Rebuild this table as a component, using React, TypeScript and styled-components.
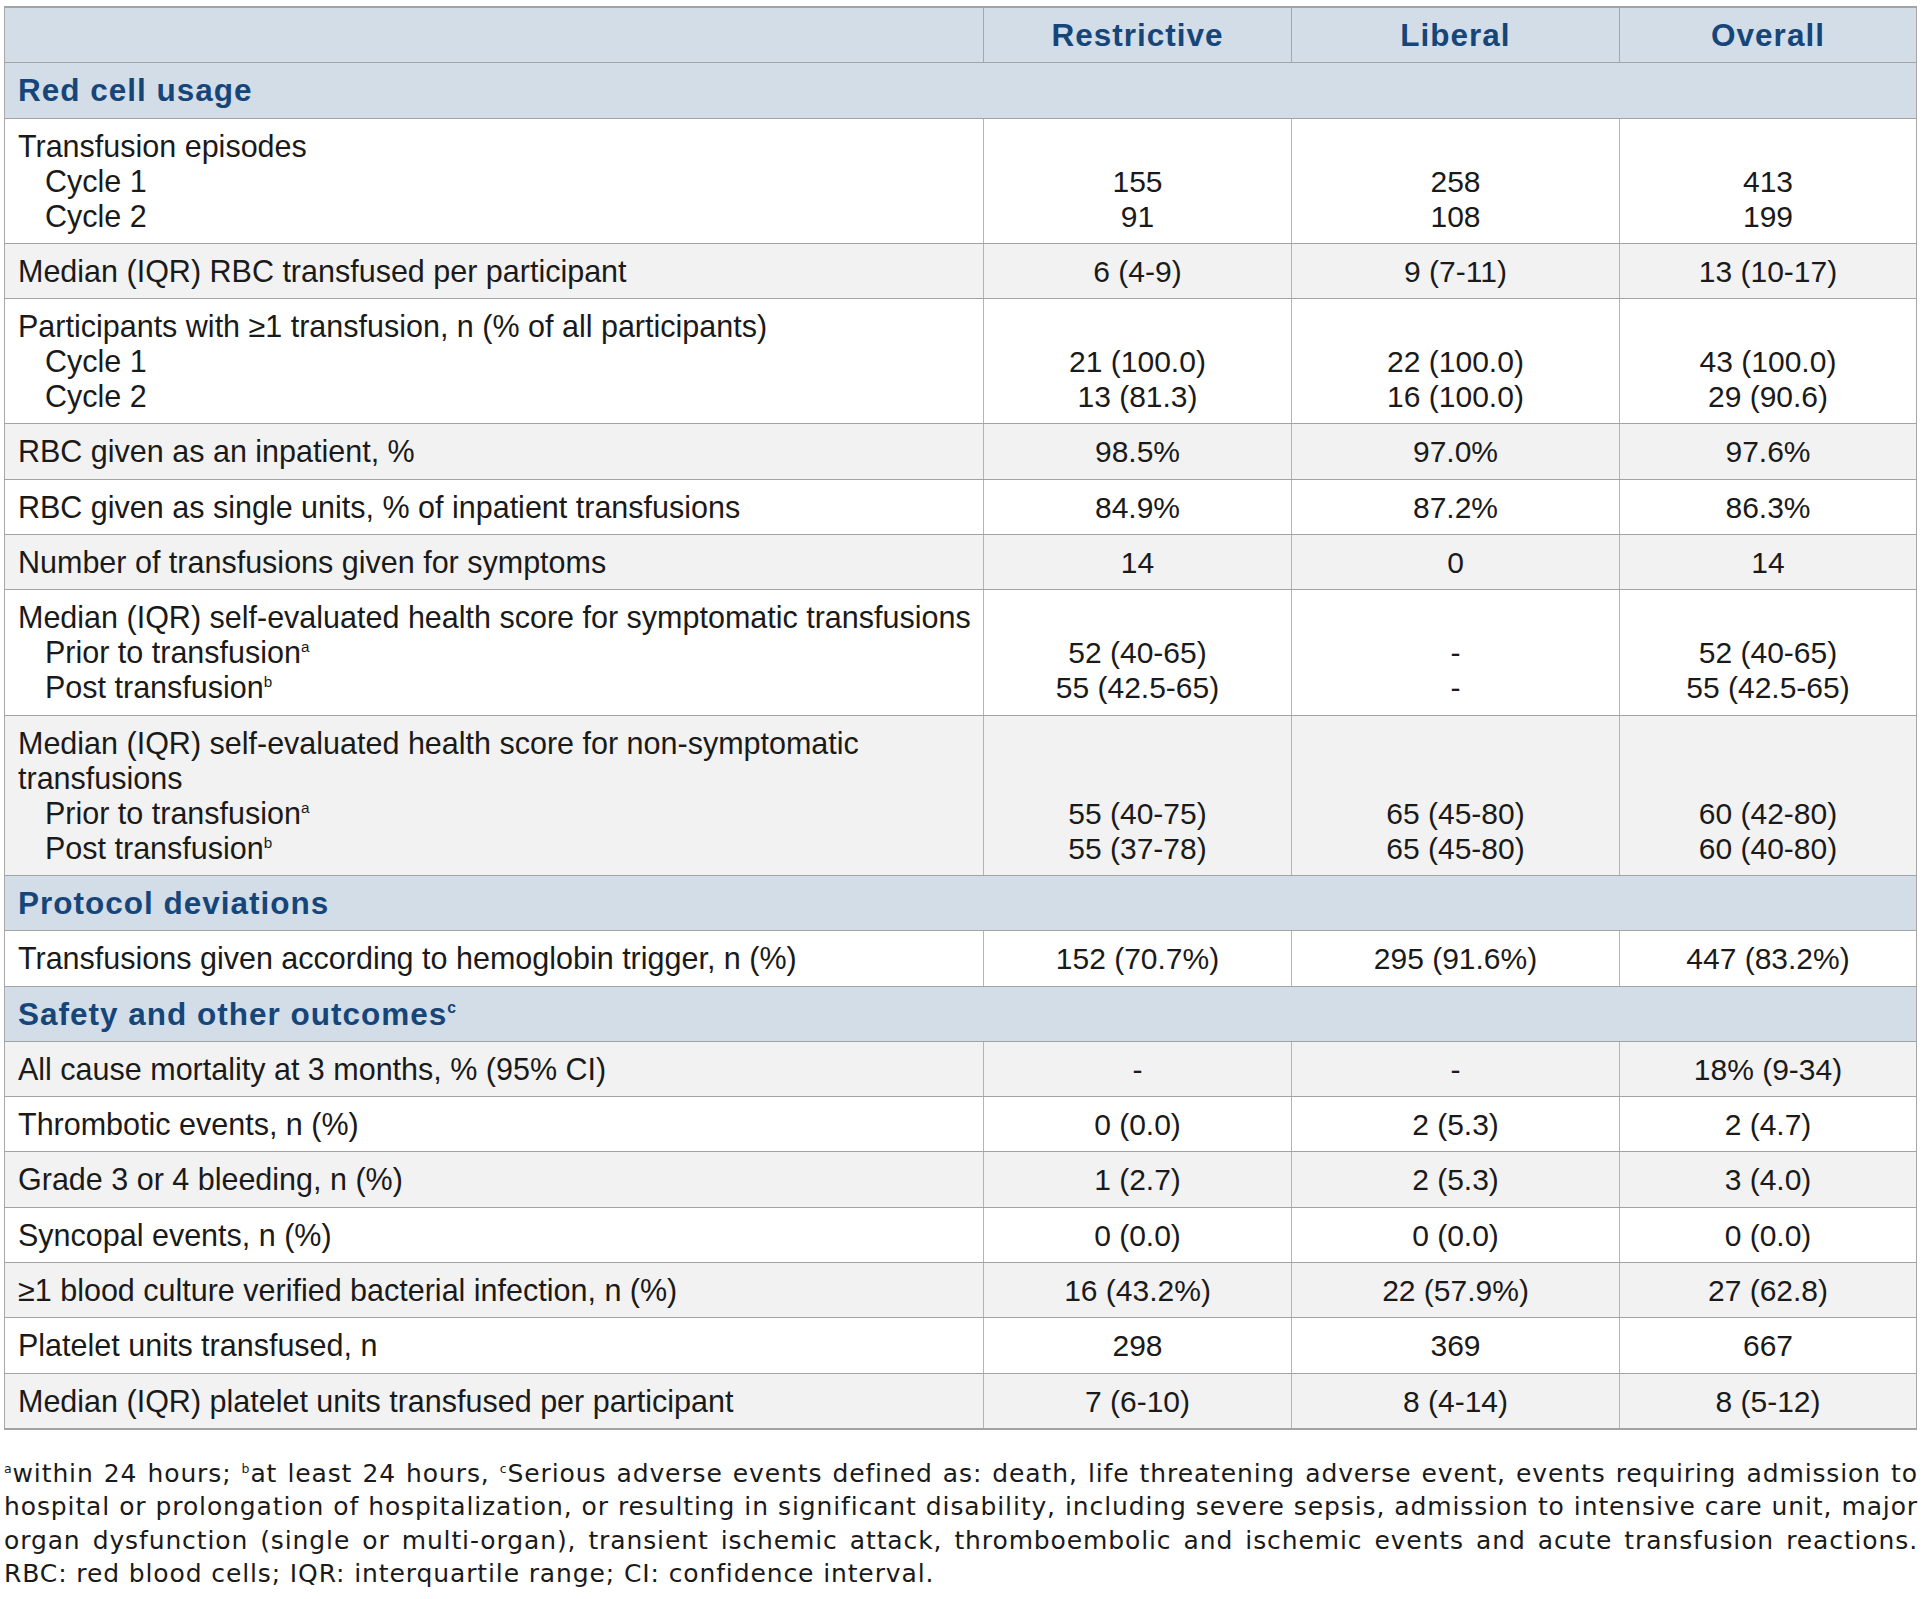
import React from "react";
import styled, { createGlobalStyle } from "styled-components";

const GlobalStyle = createGlobalStyle`
  html, body {
    margin: 0;
    padding: 0;
    background: #ffffff;
  }
  body {
    font-family: "Liberation Sans", Arial, sans-serif;
    color: #1a1a1a;
  }
`;

const Page = styled.div`
  width: 1925px;
  padding: 6px 9px 0 4px;
  box-sizing: border-box;
`;

const Table = styled.table`
  width: 1912px;
  table-layout: fixed;
  border-collapse: collapse;
  border-top: 2px solid #a3a3a3;
  border-bottom: 2px solid #a3a3a3;
  border-left: 1px solid #a8a8a8;
  border-right: 1px solid #a8a8a8;
  font-size: 30px;
`;

const Row = styled.tr<{ $tone: "head" | "white" | "grey" }>`
  background: ${({ $tone }) =>
    $tone === "head" ? "#d3dde7" : $tone === "grey" ? "#f2f2f2" : "#ffffff"};
`;

const HeadCell = styled.th`
  padding: 10px 12px 9.3px;
  line-height: 35px;
  font-size: 31.5px;
  font-weight: 700;
  letter-spacing: 1px;
  color: #164679;
  text-align: center;
  border-bottom: 1px solid #a3a3a3;
  border-left: 1px solid #a8a8a8;
  &:first-child {
    border-left: none;
  }
`;

const SectionCell = styled.td`
  padding: 10px 12px 9.3px 13px;
  line-height: 35px;
  font-size: 31.5px;
  font-weight: 700;
  letter-spacing: 1px;
  color: #164679;
  border-bottom: 1px solid #a3a3a3;
`;

const LabelCell = styled.td`
  padding: 10px 8px 9.3px 13px;
  line-height: 35px;
  font-size: 30.5px;
  vertical-align: top;
  border-bottom: 1px solid #a3a3a3;
  white-space: nowrap;
`;

const ValueCell = styled.td`
  padding: 10px 8px 9.3px;
  line-height: 35px;
  vertical-align: top;
  text-align: center;
  border-bottom: 1px solid #a3a3a3;
  border-left: 1px solid #b4b4b4;
  white-space: nowrap;
`;

const Line = styled.div<{ $indent?: boolean }>`
  height: 35px;
  padding-left: ${({ $indent }) => ($indent ? "27px" : "0")};
`;

const Sup = styled.sup`
  font-size: 0.5em;
  line-height: 0;
  vertical-align: 0.75em;
`;

const Notes = styled.div`
  margin-top: 27px;
  width: 1914px;
  font-family: "DejaVu Sans", Verdana, sans-serif;
  font-size: 25px;
  letter-spacing: 0.88px;
  line-height: 33.3px;
  color: #1a1a1a;
`;

const NoteLine = styled.div<{ $last?: boolean }>`
  white-space: nowrap;
  text-align: ${({ $last }) => ($last ? "left" : "justify")};
  text-align-last: ${({ $last }) => ($last ? "left" : "justify")};
`;

type LabelLine = { text: string; indent?: boolean; sup?: string };
type DataRow = { kind: "data"; label: LabelLine[]; values: string[][] };
type SectionRow = { kind: "section"; label: string; sup?: string };

const rows: (DataRow | SectionRow)[] = [
  { kind: "section", label: "Red cell usage" },
  {
    kind: "data",
    label: [
      { text: "Transfusion episodes" },
      { text: "Cycle 1", indent: true },
      { text: "Cycle 2", indent: true },
    ],
    values: [
      ["", "155", "91"],
      ["", "258", "108"],
      ["", "413", "199"],
    ],
  },
  {
    kind: "data",
    label: [{ text: "Median (IQR) RBC transfused per participant" }],
    values: [["6 (4-9)"], ["9 (7-11)"], ["13 (10-17)"]],
  },
  {
    kind: "data",
    label: [
      { text: "Participants with ≥1 transfusion, n (% of all participants)" },
      { text: "Cycle 1", indent: true },
      { text: "Cycle 2", indent: true },
    ],
    values: [
      ["", "21 (100.0)", "13 (81.3)"],
      ["", "22 (100.0)", "16 (100.0)"],
      ["", "43 (100.0)", "29 (90.6)"],
    ],
  },
  {
    kind: "data",
    label: [{ text: "RBC given as an inpatient, %" }],
    values: [["98.5%"], ["97.0%"], ["97.6%"]],
  },
  {
    kind: "data",
    label: [{ text: "RBC given as single units, % of inpatient transfusions" }],
    values: [["84.9%"], ["87.2%"], ["86.3%"]],
  },
  {
    kind: "data",
    label: [{ text: "Number of transfusions given for symptoms" }],
    values: [["14"], ["0"], ["14"]],
  },
  {
    kind: "data",
    label: [
      { text: "Median (IQR) self-evaluated health score for symptomatic transfusions" },
      { text: "Prior to transfusion", indent: true, sup: "a" },
      { text: "Post transfusion", indent: true, sup: "b" },
    ],
    values: [
      ["", "52 (40-65)", "55 (42.5-65)"],
      ["", "-", "-"],
      ["", "52 (40-65)", "55 (42.5-65)"],
    ],
  },
  {
    kind: "data",
    label: [
      { text: "Median (IQR) self-evaluated health score for non-symptomatic" },
      { text: "transfusions" },
      { text: "Prior to transfusion", indent: true, sup: "a" },
      { text: "Post transfusion", indent: true, sup: "b" },
    ],
    values: [
      ["", "", "55 (40-75)", "55 (37-78)"],
      ["", "", "65 (45-80)", "65 (45-80)"],
      ["", "", "60 (42-80)", "60 (40-80)"],
    ],
  },
  { kind: "section", label: "Protocol deviations" },
  {
    kind: "data",
    label: [{ text: "Transfusions given according to hemoglobin trigger, n (%)" }],
    values: [["152 (70.7%)"], ["295 (91.6%)"], ["447 (83.2%)"]],
  },
  { kind: "section", label: "Safety and other outcomes", sup: "c" },
  {
    kind: "data",
    label: [{ text: "All cause mortality at 3 months, % (95% CI)" }],
    values: [["-"], ["-"], ["18% (9-34)"]],
  },
  {
    kind: "data",
    label: [{ text: "Thrombotic events, n (%)" }],
    values: [["0 (0.0)"], ["2 (5.3)"], ["2 (4.7)"]],
  },
  {
    kind: "data",
    label: [{ text: "Grade 3 or 4 bleeding, n (%)" }],
    values: [["1 (2.7)"], ["2 (5.3)"], ["3 (4.0)"]],
  },
  {
    kind: "data",
    label: [{ text: "Syncopal events, n (%)" }],
    values: [["0 (0.0)"], ["0 (0.0)"], ["0 (0.0)"]],
  },
  {
    kind: "data",
    label: [{ text: "≥1 blood culture verified bacterial infection, n (%)" }],
    values: [["16 (43.2%)"], ["22 (57.9%)"], ["27 (62.8)"]],
  },
  {
    kind: "data",
    label: [{ text: "Platelet units transfused, n" }],
    values: [["298"], ["369"], ["667"]],
  },
  {
    kind: "data",
    label: [{ text: "Median (IQR) platelet units transfused per participant" }],
    values: [["7 (6-10)"], ["8 (4-14)"], ["8 (5-12)"]],
  },
];

export default function App() {
  let stripe = 0;
  return (
    <>
      <GlobalStyle />
      <Page>
        <Table>
          <colgroup>
            <col style={{ width: 979 }} />
            <col style={{ width: 308 }} />
            <col style={{ width: 328 }} />
            <col style={{ width: 297 }} />
          </colgroup>
          <thead>
            <Row $tone="head">
              <HeadCell />
              <HeadCell>Restrictive</HeadCell>
              <HeadCell>Liberal</HeadCell>
              <HeadCell>Overall</HeadCell>
            </Row>
          </thead>
          <tbody>
            {rows.map((row, i) => {
              if (row.kind === "section") {
                return (
                  <Row $tone="head" key={i}>
                    <SectionCell colSpan={4}>
                      {row.label}
                      {row.sup && <Sup>{row.sup}</Sup>}
                    </SectionCell>
                  </Row>
                );
              }
              stripe += 1;
              return (
                <Row $tone={stripe % 2 === 1 ? "white" : "grey"} key={i}>
                  <LabelCell>
                    {row.label.map((l, j) => (
                      <Line $indent={l.indent} key={j}>
                        {l.text}
                        {l.sup && <Sup>{l.sup}</Sup>}
                      </Line>
                    ))}
                  </LabelCell>
                  {row.values.map((col, c) => (
                    <ValueCell key={c}>
                      {col.map((v, j) => (
                        <Line key={j}>{v || "\u00a0"}</Line>
                      ))}
                    </ValueCell>
                  ))}
                </Row>
              );
            })}
          </tbody>
        </Table>
        <Notes>
          <NoteLine>
            <Sup>a</Sup>within 24 hours; <Sup>b</Sup>at least 24 hours, <Sup>c</Sup>Serious adverse
            events defined as: death, life threatening adverse event, events requiring admission to
          </NoteLine>
          <NoteLine>
            hospital or prolongation of hospitalization, or resulting in significant disability,
            including severe sepsis, admission to intensive care unit, major
          </NoteLine>
          <NoteLine>
            organ dysfunction (single or multi-organ), transient ischemic attack, thromboembolic and
            ischemic events and acute transfusion reactions.
          </NoteLine>
          <NoteLine $last>RBC: red blood cells; IQR: interquartile range; CI: confidence interval.</NoteLine>
        </Notes>
      </Page>
    </>
  );
}
